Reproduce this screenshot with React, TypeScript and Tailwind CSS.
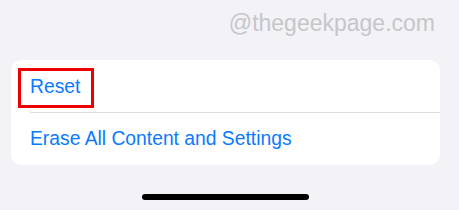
export default function App() {
  return (
    <div className="h-[210px] w-[459px] overflow-hidden bg-[#f2f2f7] font-['Liberation_Sans',Arial,sans-serif]">
      <div className="flex justify-end pr-[24px] pt-[10px]">
        <span className="text-[23px] leading-[26px] text-[#c6c6ca]">@thegeekpage.com</span>
      </div>

      <div className="relative ml-[11px] mt-[24px] w-[429px] rounded-[10px] bg-white">
        <div className="flex h-[52px] items-center pl-[19px] pt-[2px]">
          <span className="text-[19.3px] text-[#0a7aff]">Reset</span>
        </div>
        <div className="ml-[19px] h-px bg-[#dedee2]" />
        <div className="flex h-[52px] items-center pl-[19px] pt-[1px]">
          <span className="text-[19.3px] text-[#0a7aff]">Erase All Content and Settings</span>
        </div>

        {/* highlight box drawn over the first row */}
        <div className="absolute left-[7px] top-[8px] h-[40px] w-[76px] border-[3px] border-[#ee0000]" />
      </div>

      <div className="mt-[29px] flex justify-center pr-[9px]">
        <div className="h-[6px] w-[167px] rounded-full bg-black" />
      </div>
    </div>
  )
}
